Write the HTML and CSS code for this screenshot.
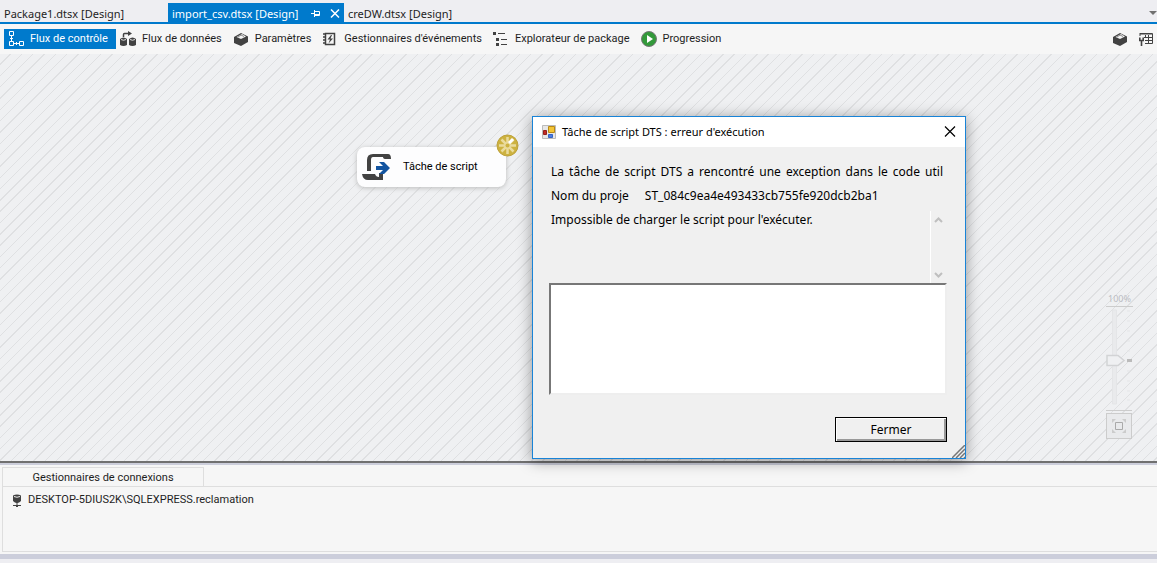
FILE: index.html
```html
<!DOCTYPE html>
<html lang="fr">
<head>
<meta charset="utf-8">
<title>import_csv.dtsx [Design]</title>
<link rel="stylesheet" href="styles.css">
</head>
<body>
<nav class="tabs">
  <button class="tab tab-first">Package1.dtsx [Design]</button>
  <div class="tab tab-active">
    <button class="tab-label">import_csv.dtsx [Design]</button>
    <button class="tab-icon" aria-label="Épingler"><svg width="9" height="9" viewBox="0 0 9 9" fill="none" stroke="#fff"><path d="M0 4.500h3M3.500 1v7M4 2.500h4.500v4H4M4 5.500h4"/></svg></button>
    <button class="tab-icon" aria-label="Fermer l'onglet"><svg width="10" height="9" viewBox="0 0 10 9" fill="none" stroke="#fff" stroke-width="1.500"><path d="M1 0.500l8 8M9 0.500l-8 8"/></svg></button>
  </div>
  <button class="tab">creDW.dtsx [Design]</button>
  <button class="tab-more" aria-label="Liste des onglets"><svg width="8" height="4" viewBox="0 0 8 4"><path d="M0 0h8L4 4z" fill="#717171"/></svg></button>
</nav>
<div class="toolbar">
  <button class="tool tool-active"><svg width="16" height="16" viewBox="0 0 16 16" fill="none" stroke="#fff"><path d="M1.500.5h4v4h-4zM1.500 10.500h4v4h-4zM11.500 10.500h4v4h-4zM3.500 5v5M6 12.500h5M8.500 11v3M2 7.500h3"/></svg>Flux de contrôle</button>
  <button class="tool"><svg width="16" height="16" viewBox="0 0 16 16"><path d="M0 8q3.500-3 7 0v6q-3.500 2-7 0zM9 8q3.500-3 7 0v6q-3.500 2-7 0z" fill="#424242"/><path d="M1 8.500q2.500 1.500 5 0M10 8.500q2.500 1.500 5 0" stroke="#ddd" fill="none"/><path d="M3.500 6V3.500q0-1 1-1H10" stroke="#424242" stroke-width="1.500" fill="none"/><path d="M8 0l4 2.500L8 5z" fill="#424242"/></svg>Flux de données</button>
  <button class="tool"><svg width="16" height="14" viewBox="0 0 16 14"><path d="M8 1l7 3.500V10l-7 4-7-3V5z" fill="#424242"/><path d="M9 2l4 2.500-5 2.500L3.500 5z" fill="#f5f5f5"/><path d="M5 5l3-2 3 1.500" stroke="#888" fill="none"/></svg>Paramètres</button>
  <button class="tool"><svg width="16" height="14" viewBox="0 0 16 14"><path d="M3.500 1.500h9v11h-9z" fill="none" stroke="#424242" stroke-width="1.500"/><path d="M1 2h3M1 5h3M1 8h3M1 11h3" stroke="#424242" stroke-width="1.500"/><path d="M9 3L5.500 7.500H8L6.500 11.500 11 6.500H8.500L10 3z" fill="#424242"/></svg>Gestionnaires d'événements</button>
  <button class="tool"><svg width="16" height="14" viewBox="0 0 16 14" fill="#424242"><path d="M0 0h3v3H0zM3 6h3v3H3zM3 11h3v3H3zM5 1h7v1H5zM8 7h6v1H8zM8 12h6v1H8z"/></svg>Explorateur de package</button>
  <button class="tool"><svg width="16" height="16" viewBox="0 0 16 16"><circle cx="8" cy="8" r="7.500" fill="#33993a" stroke="#777"/><path d="M6 4l6 4-6 4z" fill="#fff"/></svg>Progression</button>
  <button class="tool tool-right" aria-label="Paramètres"><svg width="16" height="14" viewBox="0 0 16 14"><path d="M8 1l7 3.500V10l-7 4-7-3V5z" fill="#424242"/><path d="M9 2l4 2.500-5 2.500L3.500 5z" fill="#f5f5f5"/><path d="M5 5l3-2 3 1.500" stroke="#888" fill="none"/></svg></button>
  <button class="tool tool-last" aria-label="Variables"><svg width="14" height="14" viewBox="0 0 14 14" fill="none" stroke="#424242"><path d="M1 1.500h12.500v10H6M1 1v3M1 2h12M5 5.500h8M6 8.500h7M6.500 3v3M9.500 3v8"/><path d="M.8 5.500v3h3.400v-3M2.500 8v6" stroke-width="1.600"/></svg></button>
</div>
<main class="canvas">
  <div class="task">
    <svg width="30" height="28" viewBox="0 0 30 28"><path d="M5 18V7q0-6 6-6h15q3 0 3 5h-5q-3 0-3-2H11q-2 0-2 3v11z" fill="#424242"/><path d="M21 20v7H6q-5 0-6-6h13q1 3 4 3v-4z" fill="#424242"/><path d="M14 13h7l-4-4h5l6 6-6 6h-5l4-4h-7z" fill="#1254a0"/></svg>
    <span>Tâche de script</span>
    <svg class="task-badge" width="23" height="23" viewBox="0 0 23 23"><circle cx="11.500" cy="11.500" r="10.500" fill="#cdb240" stroke="#bda13a"/><path d="M11.500 3v17M3 11.500h17M5.500 5.500l12 12M17.500 5.500l-12 12" stroke="#eadb9d" stroke-width="2.500"/><path d="M13 9l4-4" stroke="#fff" stroke-width="3"/><circle cx="11.500" cy="11.500" r="2" fill="#cdb240"/></svg>
  </div>
  <div class="zoom">
    <span class="zoom-value">100%</span>
    <svg width="27" height="104" viewBox="0 0 27 104" fill="none"><path d="M6.500 3h4v94h-4z" fill="#e9eaec" stroke="#e4e5e7"/><path d="M21 4h3M21 14h3M21 24h3M21 34h3M21 44h3M21 64h3M21 74h3M21 84h3M21 93h3" stroke="#e4e5e7"/><path d="M1 48.500h11l6 5-6 5H1z" fill="#eff0f2" stroke="#d2d3d5" stroke-width="1.500"/><path d="M21 52h5v3h-5z" fill="#bbb"/><path d="M0 103.500h26" stroke="#ccc"/></svg>
    <button class="zoom-fit" aria-label="Ajuster"><svg width="14" height="14" viewBox="0 0 14 14" fill="none"><path d="M3.500 3.500h7v7h-7z" stroke="#aaa"/><path d="M0 4V0h4zM10 0h4v4zM14 10v4h-4zM4 14H0v-4z" fill="#ccc"/></svg></button>
  </div>
  <section class="dialog" role="dialog" aria-labelledby="dialog-title">
    <header class="dialog-head">
      <svg width="14" height="14" viewBox="0 0 14 14"><path d="M.5.5h13v13H.5z" fill="#e7e7e7" stroke="#bbb"/><path d="M6.500 1.500h6v6h-6z" fill="#f4c536" stroke="#b88916"/><path d="M1.500 5.500h3v4h-3z" fill="#c12a25" stroke="#94201c"/><path d="M6.500 9.500h4v3h-4z" fill="#4c7de0" stroke="#3563c4"/></svg>
      <h1 class="dialog-title" id="dialog-title">Tâche de script DTS : erreur d'exécution</h1>
      <button class="dialog-close" aria-label="Fermer la fenêtre"><svg width="12" height="12" viewBox="0 0 12 12" stroke="#000" stroke-width="1.200"><path d="M1 .5l10 10M11 .5l-10 10"/></svg></button>
    </header>
    <div class="dialog-body">
      <p class="line line-wide">La tâche de script DTS a rencontré une exception dans le code util</p>
      <p class="line project"><span>Nom du proje</span><span>ST_084c9ea4e493433cb755fe920dcb2ba1</span></p>
      <div class="message">
        <p class="line">Impossible de charger le script pour l'exécuter.</p>
        <div class="scroll">
          <svg width="9" height="6" viewBox="0 0 9 6" fill="none" stroke="#bfbfbf" stroke-width="2"><path d="M1 5l3.500-3.500L8 5"/></svg>
          <svg width="9" height="6" viewBox="0 0 9 6" fill="none" stroke="#bfbfbf" stroke-width="2"><path d="M1 1l3.500 3.500L8 1"/></svg>
        </div>
      </div>
      <textarea class="details" aria-label="Détails"></textarea>
      <button class="close-button">Fermer</button>
    </div>
    <svg class="grip" width="13" height="13" viewBox="0 0 13 13" stroke="#777" stroke-width="1.500"><path d="M0 13L13 0M4 13l9-9M8 13l5-5M12 13l1-1"/></svg>
  </section>
</main>
<section class="connections">
  <h2 class="connections-tab">Gestionnaires de connexions</h2>
  <div class="connections-list">
    <button class="connection"><svg width="8" height="13" viewBox="0 0 8 13"><path d="M0 1.500q4-2 8 0V7q-2 2-3.500 2v2H8v1H5v1H3v-1H0v-1h3.500V9Q2 9 0 7z" fill="#424242"/><path d="M1 2.500q3 1.500 6 0" stroke="#eee" fill="none"/></svg>DESKTOP-5DIUS2K\SQLEXPRESS.reclamation</button>
  </div>
</section>
<footer class="bottom"></footer>
</body>
</html>
```
FILE: styles.css
```css
* { box-sizing: border-box; }
body {
  margin: 0;
  min-height: 100vh;
  display: flex;
  flex-direction: column;
  background: #eeeef2;
  color: #1e1e1e;
  font: 12px/16px "Noto Sans", "Open Sans", sans-serif;
}
button {
  font: inherit;
  color: inherit;
  border: 0;
  padding: 0;
  background: none;
  white-space: nowrap;
}
svg { display: block; flex: none; }
h1, h2, p { margin: 0; font: inherit; }

.tabs {
  display: flex;
  height: 24px;
  padding-top: 3px;
  border-bottom: 2px solid #007acc;
  font-size: 11px;
}
.tab { display: flex; align-items: center; padding: 2px 4px 0; }
.tab-first { width: 168px; }
.tab-active {
  width: 176px;
  background: #007acc;
  color: #fff;
  gap: 10px;
}
.tab-label { flex: 1; text-align: left; }
.tab-more { margin-left: auto; }

.toolbar {
  display: flex;
  align-items: center;
  gap: 4px;
  height: 30px;
  padding: 0 4px 1px;
  background: #f6f6f6;
  font-family: Roboto, "Noto Sans", sans-serif;
  font-size: 11px;
}
.tool {
  display: flex;
  align-items: center;
  gap: 6px;
  height: 20px;
  padding-right: 7px;
}
.tool-active { width: 112px; padding-left: 4px; background: #007acc; color: #fff; }
.tool-right { margin-left: auto; }
.tool-last { padding-right: 0; }

.canvas {
  position: relative;
  flex: 1;
  min-height: 407px;
  background: repeating-linear-gradient(135deg, #eff0f2 0 7px, #dfe0e2 7px 8px);
}
.task {
  position: absolute;
  left: 357px;
  top: 93px;
  width: 149px;
  height: 40px;
  display: flex;
  align-items: center;
  gap: 11px;
  padding-left: 5px;
  border-radius: 8px;
  background: #fdfdfe;
  box-shadow: 0 1px 5px #bbb;
  color: #000;
  font-family: Roboto, "Noto Sans", sans-serif;
  font-size: 11px;
}
.task-badge { position: absolute; right: -13px; top: -13px; }
.zoom {
  position: absolute;
  right: 24px;
  top: 237px;
  width: 27px;
  display: flex;
  flex-direction: column;
}
.zoom-value {
  border-bottom: 1px solid #ccc;
  color: #bbbcc2;
  font-size: 9px;
  line-height: 15px;
  text-align: center;
}
.zoom-fit {
  display: grid;
  place-items: center;
  width: 26px;
  height: 26px;
  margin-top: 2px;
  border: 1px solid #ccc;
  background: #e9eaec;
}

.dialog {
  position: absolute;
  left: 532px;
  top: 62px;
  z-index: 1;
  width: 434px;
  border: 1px solid #1883d7;
  background: #f0f0f0;
  box-shadow: 0 2px 14px #0006;
  color: #000;
}
.dialog-head {
  display: flex;
  align-items: center;
  gap: 6px;
  height: 30px;
  padding: 0 9px;
  background: #fff;
}
.dialog-title { flex: 1; font-size: 11px; }
.dialog-body {
  display: flex;
  flex-direction: column;
  padding: 13px 18px 16px 16px;
  font-size: 12px;
}
.line { line-height: 24px; padding-left: 2px; white-space: nowrap; }
.line-wide { padding-right: 4px; text-align: justify; text-align-last: justify; }
.project { display: flex; gap: 16px; }
.message { display: flex; justify-content: space-between; height: 75px; }
.scroll {
  display: flex;
  flex-direction: column;
  justify-content: space-between;
  width: 17px;
  margin-top: 3px;
  padding: 6px 3px 5px;
  border-left: 1px solid #fff;
}
.details {
  height: 112px;
  border: 2px solid;
  border-color: #777 #eee #eee #777;
  background: #fff;
  resize: none;
}
.close-button {
  align-self: flex-end;
  width: 112px;
  height: 25px;
  margin-top: 22px;
  border: 1px solid #000;
  box-shadow: inset 1px 1px #fff, inset -2px -2px #999;
}
.grip { position: absolute; right: 0; bottom: 0; }

.connections {
  position: relative;
  display: flex;
  flex-direction: column;
  height: 93px;
  padding: 4px 0 2px 2px;
  border-top: 2px solid #707070;
  background: #f6f6f6;
  box-shadow: inset 0 2px #cccedb;
}
.connections-tab {
  width: 202px;
  height: 19px;
  border: 1px solid #dedede;
  border-bottom: 0;
  font-family: Roboto, "Noto Sans", sans-serif;
  font-size: 11px;
  line-height: 20px;
  text-align: center;
}
.connections-list {
  flex: 1;
  border: 1px solid #dedede;
  border-right: 0;
  padding: 4px 10px;
}
.connection {
  display: flex;
  align-items: center;
  gap: 7px;
  font-family: Roboto, "Noto Sans", sans-serif;
  font-size: 11px;
  line-height: 18px;
}
.bottom { height: 9px; border-top: 5px solid #cccedb; }
```
